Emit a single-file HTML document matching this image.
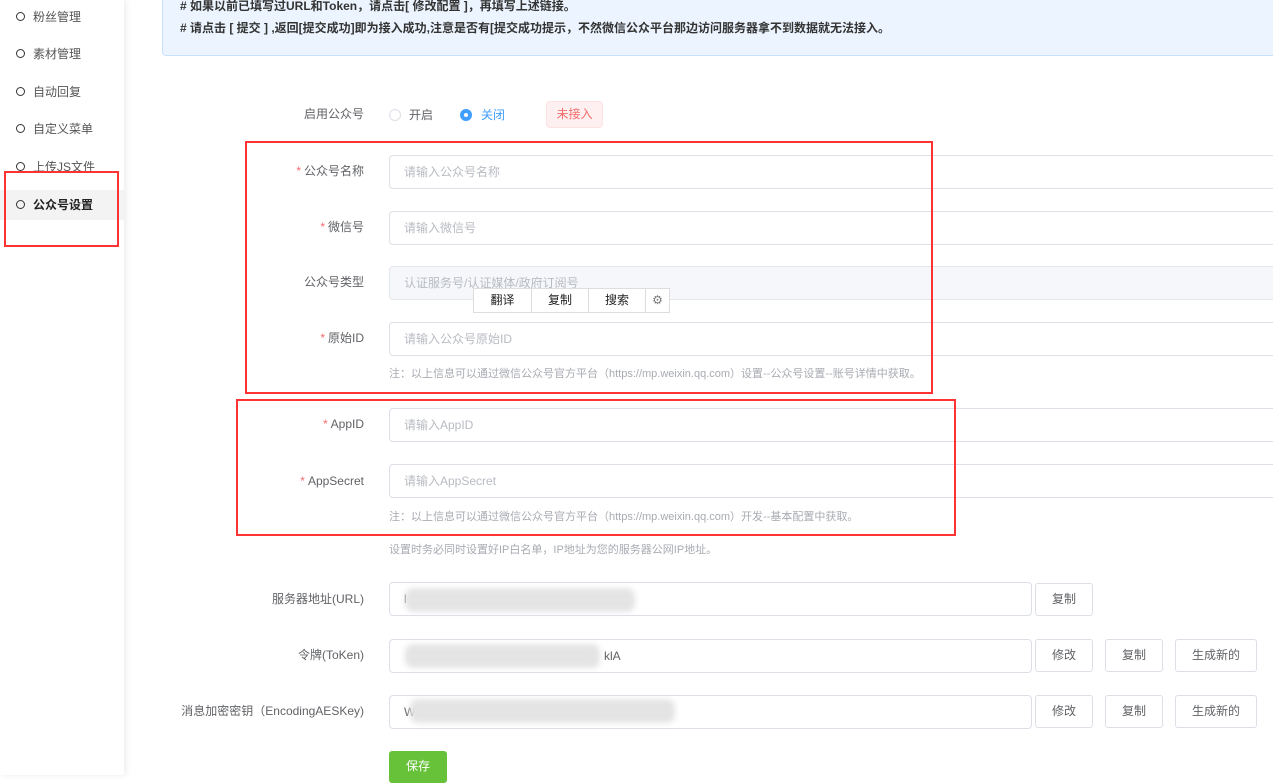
<!DOCTYPE html>
<html><head><meta charset="utf-8"><style>
*{margin:0;padding:0;box-sizing:border-box}
body{width:1273px;height:775px;overflow:hidden;background:#fff;font-family:"Liberation Sans","Noto Sans CJK SC",sans-serif;font-size:12px;color:#606266;position:relative}
.a{position:absolute}
.side{left:0;top:0;width:124px;height:775px;background:#fff;box-shadow:2px 0 6px rgba(0,0,0,.08)}
.mi{position:absolute;left:16px;font-size:12px;color:#555;display:flex;align-items:center;height:20px}
.mi i{display:inline-block;width:9px;height:9px;border:1.6px solid #333;border-radius:50%;margin-right:8px}
.info{left:162px;top:-6px;width:1120px;height:62px;background:#ecf5ff;border:1px solid #c6e2ff;border-radius:4px}
.info p{position:absolute;left:17px;font-size:12px;color:#333;font-weight:bold}
.lbl{position:absolute;right:909px;font-size:12px;color:#606266;text-align:right;white-space:nowrap;line-height:16px}
.lbl b{color:#f56c6c;font-weight:normal;margin-right:3px}
.inp{position:absolute;left:389px;width:900px;height:34px;border:1px solid #dcdfe6;border-radius:4px;padding-left:14px;line-height:32px;color:#b8bbc2;font-size:12px}
.note{position:absolute;left:389px;font-size:11px;color:#a8abb2}
.btn{position:absolute;height:33px;border:1px solid #dcdfe6;border-radius:3px;background:#fff;font-size:12px;color:#606266;text-align:center;line-height:31px}
.red{position:absolute;border:2px solid #f33}
.blur{position:absolute;background:#e4e4e4;filter:blur(3px);border-radius:8px}
.pp{position:absolute;top:0;height:23px;border-right:1px solid #ddd;text-align:center;line-height:23px}
</style></head><body>
<div class="a side">
<div class="mi" style="top:6px"><i></i>粉丝管理</div>
<div class="mi" style="top:43px"><i></i>素材管理</div>
<div class="mi" style="top:81px"><i></i>自动回复</div>
<div class="mi" style="top:118px"><i></i>自定义菜单</div>
<div class="mi" style="top:156px"><i></i>上传JS文件</div>
<div class="a" style="left:0;top:190px;width:124px;height:30px;background:#f3f3f3"></div>
<div class="mi" style="top:194px;color:#222;font-weight:bold"><i></i>公众号设置</div>
</div>
<div class="red" style="left:4px;top:171px;width:115px;height:76px"></div>
<div class="a info">
<p style="top:2px">#&nbsp;如果以前已填写过URL和Token，请点击[ 修改配置 ]，再填写上述链接。</p>
<p style="top:24px"># 请点击 [ 提交 ] ,返回[提交成功]即为接入成功,注意是否有[提交成功提示，不然微信公众平台那边访问服务器拿不到数据就无法接入。</p>
</div>

<div class="lbl" style="top:106px">启用公众号</div>
<div class="a" style="left:389px;top:109px;width:12px;height:12px;border:1px solid #dcdfe6;border-radius:50%"></div>
<div class="a" style="left:409px;top:106px;color:#606266">开启</div>
<div class="a" style="left:460px;top:109px;width:12px;height:12px;background:#409eff;border-radius:50%"><div class="a" style="left:4px;top:4px;width:4px;height:4px;background:#fff;border-radius:50%"></div></div>
<div class="a" style="left:481px;top:106px;color:#409eff">关闭</div>
<div class="a" style="left:546px;top:101px;width:57px;height:27px;background:#fef0f0;border:1px solid #fde2e2;border-radius:4px;color:#f56c6c;text-align:center;line-height:25px;font-size:12px">未接入</div>

<div class="lbl" style="top:163px"><b>*</b>公众号名称</div>
<div class="inp" style="top:155px">请输入公众号名称</div>
<div class="lbl" style="top:219px"><b>*</b>微信号</div>
<div class="inp" style="top:211px">请输入微信号</div>
<div class="lbl" style="top:274px">公众号类型</div>
<div class="inp" style="top:266px;background:#f5f7fa;border-color:#e4e7ed">认证服务号/认证媒体/政府订阅号</div>
<div class="lbl" style="top:330px"><b>*</b>原始ID</div>
<div class="inp" style="top:322px">请输入公众号原始ID</div>
<div class="note" style="top:365px">注：以上信息可以通过微信公众号官方平台（https://mp.weixin.qq.com）设置--公众号设置--账号详情中获取。</div>

<div class="a" style="left:473px;top:288px;width:197px;height:25px;background:#fff;border:1px solid #ddd;font-size:12px;color:#222">
<div class="pp" style="left:0;width:58px">翻译</div>
<div class="pp" style="left:58px;width:57px">复制</div>
<div class="pp" style="left:115px;width:57px">搜索</div>
<div class="pp" style="left:172px;width:23px;border:none;color:#777">⚙</div>
</div>

<div class="lbl" style="top:416px"><b>*</b>AppID</div>
<div class="inp" style="top:408px">请输入AppID</div>
<div class="lbl" style="top:473px"><b>*</b>AppSecret</div>
<div class="inp" style="top:464px">请输入AppSecret</div>
<div class="note" style="top:508px">注：以上信息可以通过微信公众号官方平台（https://mp.weixin.qq.com）开发--基本配置中获取。</div>
<div class="note" style="top:541px">设置时务必同时设置好IP白名单，IP地址为您的服务器公网IP地址。</div>

<div class="red" style="left:245px;top:141px;width:688px;height:253px"></div>
<div class="red" style="left:236px;top:399px;width:720px;height:137px"></div>

<div class="lbl" style="top:591px">服务器地址(URL)</div>
<div class="inp" style="top:582px;width:643px;color:#606266">l</div>
<div class="blur" style="left:405px;top:588px;width:230px;height:24px"></div>
<div class="btn" style="left:1035px;top:583px;width:58px">复制</div>

<div class="lbl" style="top:647px">令牌(ToKen)</div>
<div class="inp" style="top:639px;width:643px;color:#606266"><span style="margin-left:200px">klA</span></div>
<div class="blur" style="left:405px;top:644px;width:195px;height:24px"></div>
<div class="btn" style="left:1035px;top:639px;width:58px">修改</div>
<div class="btn" style="left:1105px;top:639px;width:58px">复制</div>
<div class="btn" style="left:1175px;top:639px;width:82px">生成新的</div>

<div class="lbl" style="top:703px">消息加密密钥（EncodingAESKey)</div>
<div class="inp" style="top:695px;width:643px;color:#606266">W</div>
<div class="blur" style="left:410px;top:699px;width:265px;height:24px"></div>
<div class="btn" style="left:1035px;top:695px;width:58px">修改</div>
<div class="btn" style="left:1105px;top:695px;width:58px">复制</div>
<div class="btn" style="left:1175px;top:695px;width:82px">生成新的</div>

<div class="a" style="left:389px;top:751px;width:58px;height:32px;background:#67c23a;border-radius:3px;color:#fff;text-align:center;line-height:30px;font-size:12px">保存</div>
</body></html>
